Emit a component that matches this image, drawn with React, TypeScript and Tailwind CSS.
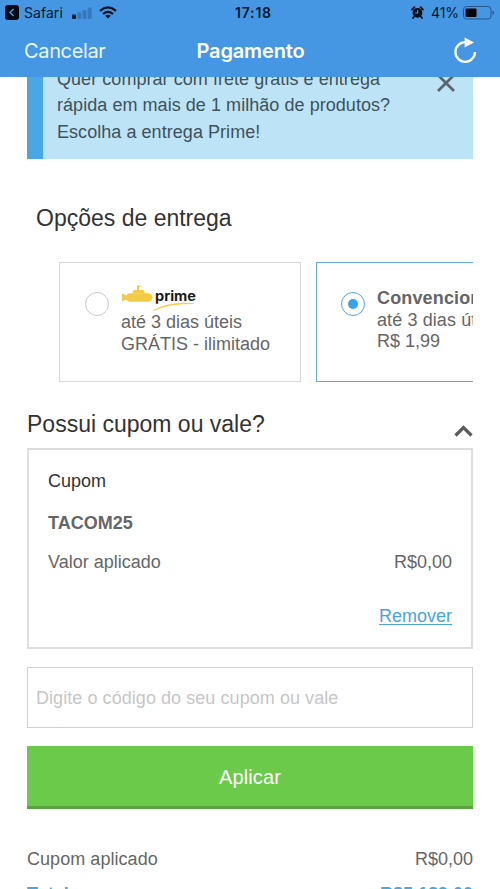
import React from "react";

function StatusBar() {
  return (
    <div className="flex h-[25px] items-center px-[5px] font-['Inter',sans-serif] text-[14px] text-[#06182c]">
      <div className="flex w-[230px] items-center">
        <svg width="14" height="15" viewBox="0 0 14 15">
          <rect width="14" height="15" rx="3" fill="#050b14" />
          <path d="M8.6 4 5 7.5 8.6 11" fill="none" stroke="#4697e3" strokeWidth="1.5" />
        </svg>
        <span className="ml-[5px] w-[40px] whitespace-nowrap text-[14px] tracking-[0.05px]">Safari</span>
        <svg className="ml-[8px]" width="20" height="12" viewBox="0 0 20 12">
          <rect x="0" y="7.5" width="4" height="4.5" rx="1" fill="#06182c" />
          <rect x="5.3" y="5.5" width="4" height="6.5" rx="1" fill="#3478bd" />
          <rect x="10.5" y="3" width="4" height="9" rx="1" fill="#3478bd" />
          <rect x="15.7" y="0.5" width="4" height="11.5" rx="1" fill="#3478bd" />
        </svg>
        <svg className="ml-[7px]" width="18" height="13" viewBox="0 0 18 13">
          <g fill="none" stroke="#06101c" strokeWidth="2.2">
            <path d="M1 4.8Q9-2 17 4.8" />
            <path d="M4 8Q9 3.8 14 8" />
          </g>
          <path d="M6.2 9.7Q9 7.7 11.8 9.7L9 12.6Z" fill="#06101c" />
        </svg>
      </div>
      <span className="text-[14px] font-semibold tracking-[0.8px]">17:18</span>
      <div className="flex flex-1 items-center justify-end">
        <svg width="13" height="13" viewBox="0 0 13 13">
          <circle cx="6.5" cy="6.8" r="4.9" fill="#06101c" />
          <path d="M1 3.6 3.4 1.2M12 3.6 9.6 1.2M3 10.7 2 12M10 10.7l1 1.3" stroke="#06101c" strokeWidth="1.8" strokeLinecap="round" />
          <path d="M6.7 4v3H4.2" fill="none" stroke="#4697e3" strokeWidth="1.1" />
        </svg>
        <span className="ml-[7px] w-[28px] whitespace-nowrap text-[14px] tracking-[-0.1px]">41%</span>
        <svg className="ml-[4px]" width="32" height="14" viewBox="0 0 32 14">
          <rect x="0.5" y="0.5" width="27.5" height="12.5" rx="3" fill="none" stroke="#23578c" />
          <rect x="2.5" y="2.5" width="11" height="8.5" rx="1" fill="#02060c" />
          <path d="M29.5 4.7v4.2q1.6-.6 1.6-2.1t-1.6-2.1" fill="#23578c" />
        </svg>
      </div>
    </div>
  );
}

function Header() {
  return (
    <header className="h-[77px] shrink-0 bg-[#4697e3]">
      <StatusBar />
      <div className="flex h-[52px] items-center pr-[23px] pl-[24px] font-['Inter',sans-serif] text-[20px] text-white">
        <span className="flex-1 tracking-[-0.35px] text-[#eaf6ff]">Cancelar</span>
        <span className="font-semibold tracking-[-0.15px]">Pagamento</span>
        <div className="flex flex-1 justify-end">
          <svg width="25" height="28" viewBox="0 0 25 28" fill="none">
            <path d="M13.2 5.2A9.8 9.8 0 1 0 23 15" stroke="white" strokeWidth="2.3" />
            <path d="M12.6 0.4 22 5.4 12.6 10.4Z" fill="white" />
          </svg>
        </div>
      </div>
    </header>
  );
}

function PrimeLogo() {
  return (
    <svg className="block" width="76" height="27" viewBox="0 0 76 27">
      <g fill="#f3cb45">
        <rect x="5" y="8.2" width="26.5" height="8.6" rx="4.3" />
        <path d="M1 8.5 7 11v3L1 16.2ZM11 8.5l1.5-3.4h10l1.5 3.4ZM16 6V0.5h3.5v1.6h-1.6V6Z" />
      </g>
      <path d="M32.5 25.5Q47 16.5 73 18.5 47 18.5 32.5 25.5Z" fill="#f3cb45" stroke="#f3cb45" strokeWidth="0.7" />
      <text x="34" y="16" textLength="41" lengthAdjust="spacingAndGlyphs" fontFamily="Inter, sans-serif" fontWeight="700" fontSize="13.5" fill="#1b1b1b">prime</text>
    </svg>
  );
}

function Radio({ selected }: { selected?: boolean }) {
  return (
    <span className={selected ? "flex size-6 shrink-0 items-center justify-center rounded-full border border-[#58a5d2]" : "flex size-6 shrink-0 items-center justify-center rounded-full border border-[#c9c9c9]"}>
      {selected && <span className="size-[10px] rounded-full bg-[#36a4ea]" />}
    </span>
  );
}

export default function App() {
  return (
    <div className="flex h-[889px] w-[500px] flex-col overflow-hidden bg-white font-['Liberation_Sans',Arial,sans-serif] text-[18px] text-[#666666]">
      <Header />
      <main className="flex min-h-0 flex-1 flex-col overflow-hidden px-[27px] *:shrink-0">
        <section className="flex h-[82px] items-end overflow-hidden border-l-[16px] border-[#49a7e5] bg-[#bce4f6] pr-[17px] pb-[14px] pl-[14px] text-[#3f515c]">
          <p className="w-[360px] leading-[26.5px] tracking-[0.05px]">
            Quer comprar com frete grátis e entrega
            <br />
            rápida em mais de 1 milhão de produtos?
            <br />
            Escolha a entrega Prime!
          </p>
          <svg className="mb-[52px] ml-auto" width="20" height="20" viewBox="0 0 20 20">
            <path d="m2 2 16 16M18 2 2 18" stroke="#5b656b" strokeWidth="2.8" />
          </svg>
        </section>

        <h2 className="mt-[44px] ml-[9px] text-[23px] leading-[30px] text-[#333333]">Opções de entrega</h2>

        <div className="mt-[29px] flex gap-[15px] overflow-hidden pl-[32px] leading-[21.6px]">
          <div className="flex h-[120px] w-[242px] shrink-0 border border-[#d8d8d8] pt-[22px] pl-[25px]">
            <div className="pt-[7px]">
              <Radio />
            </div>
            <div className="ml-[12px]">
              <PrimeLogo />
              <p>até 3 dias úteis</p>
              <p>GRÁTIS - ilimitado</p>
            </div>
          </div>
          <div className="flex h-[120px] w-[242px] shrink-0 border border-[#67abd0] pt-[25px] pl-[24px]">
            <div className="pt-[4px]">
              <Radio selected />
            </div>
            <div className="ml-[12px]">
              <p className="font-bold tracking-[0.15px]">Convencional</p>
              <p className="tracking-[0.1px]">até 3 dias úteis</p>
              <p>R$ 1,99</p>
            </div>
          </div>
        </div>

        <div className="mt-[26px] flex h-[40px] justify-between text-[#333333]">
          <h2 className="text-[23px] leading-[32px]">Possui cupom ou vale?</h2>
          <svg className="mt-[16px]" width="19" height="14" viewBox="0 0 19 14">
            <path d="m1.5 11.5 8-8 8 8" fill="none" stroke="#5c5c5c" strokeWidth="3.2" />
          </svg>
        </div>

        <section className="flex h-[201px] flex-col border-2 border-[#dddddd] px-[19px] pt-[19px] leading-6">
          <h3 className="text-[#333333]">Cupom</h3>
          <p className="mt-[18px] font-bold">TACOM25</p>
          <div className="mt-[15px] flex justify-between">
            <span>Valor aplicado</span>
            <span>R$0,00</span>
          </div>
          <a className="mt-[30px] self-end text-[#4aa4d9] underline underline-offset-2">Remover</a>
        </section>

        <input
          className="mt-[18px] h-[61px] border border-[#cfcfcf] px-[8px] pt-[2px] tracking-[0.06px] placeholder:text-[#c6c6c6]"
          placeholder="Digite o código do seu cupom ou vale"
        />
        <button className="mt-[18px] h-[63px] border-b-3 border-[#59a33c] bg-[#6bca49] pt-[2px] text-[20px] tracking-[0.1px] text-white">Aplicar</button>

        <dl className="mt-[38px] leading-6">
          <div className="flex justify-between">
            <dt className="tracking-[0.05px]">Cupom aplicado</dt>
            <dd>R$0,00</dd>
          </div>
          <div className="mt-[11px] flex justify-between font-bold text-[#49a7dc]">
            <dt>Total</dt>
            <dd>R$5.189,00</dd>
          </div>
        </dl>
      </main>
    </div>
  );
}
